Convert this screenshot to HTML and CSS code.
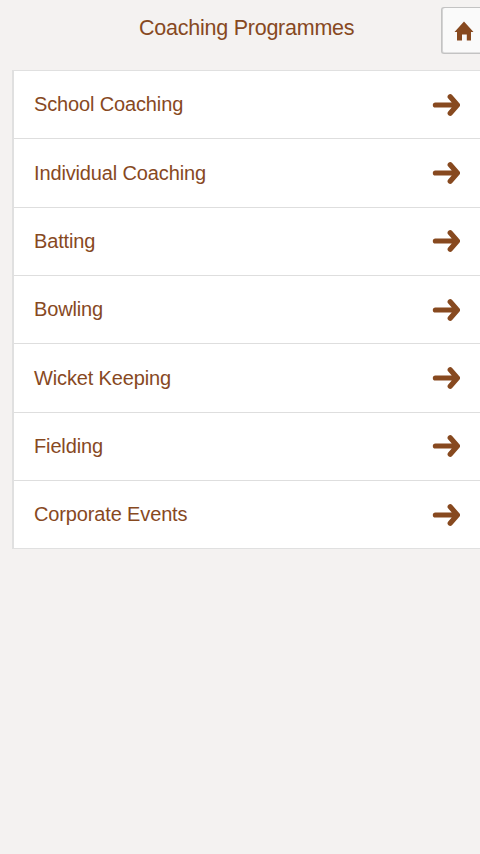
FILE: index.html
```html
<!DOCTYPE html>
<html lang="en">
<head>
<meta charset="utf-8">
<title>Coaching Programmes</title>
<link rel="stylesheet" href="styles.css">
</head>
<body>
<svg class="defs" aria-hidden="true">
  <symbol id="arrow" viewBox="0 0 28 24"><path d="M3.4 12H23M18.2 3.8L25.4 12L18.2 20.2" fill="none" stroke="currentColor" stroke-width="5.2" stroke-linecap="round" stroke-linejoin="round"/></symbol>
</svg>
<header class="header">
  <h1 class="title">Coaching Programmes</h1>
  <a class="home" href="#" aria-label="Home"><svg class="home-icon" viewBox="0 0 20 20"><path d="M10 .5L19.5 11H17V19.5H12.8V13.5H8V19.5H3V11H.5Z" fill="currentColor"/></svg></a>
</header>
<ul class="list">
  <li class="row"><span>School Coaching</span><svg class="arrow"><use href="#arrow"/></svg></li>
  <li class="row"><span>Individual Coaching</span><svg class="arrow"><use href="#arrow"/></svg></li>
  <li class="row"><span>Batting</span><svg class="arrow"><use href="#arrow"/></svg></li>
  <li class="row"><span>Bowling</span><svg class="arrow"><use href="#arrow"/></svg></li>
  <li class="row"><span>Wicket Keeping</span><svg class="arrow"><use href="#arrow"/></svg></li>
  <li class="row"><span>Fielding</span><svg class="arrow"><use href="#arrow"/></svg></li>
  <li class="row"><span>Corporate Events</span><svg class="arrow"><use href="#arrow"/></svg></li>
</ul>
</body>
</html>
```
FILE: styles.css
```css
* { box-sizing: border-box; }
body {
  margin: 0;
  min-height: 100vh;
  overflow: hidden;
  background: #f4f2f1;
  color: #87491f;
  font-family: "Liberation Sans", Arial, sans-serif;
}
.defs { display: none; }
.header {
  display: grid;
  grid-template-columns: 139px 1fr 39px;
  height: 70px;
  padding-top: 7px;
}
.title {
  grid-column: 2;
  margin: 0;
  font-size: 21.5px;
  font-weight: 400;
  line-height: 42px;
  letter-spacing: -0.24px;
  white-space: nowrap;
}
.home {
  display: flex;
  align-items: center;
  height: 47px;
  padding-left: 12px;
  border: solid #c3c3c3;
  border-width: 1px 0 1px 1px;
  border-radius: 3px 0 0 3px;
  box-shadow: inset 1px 0 #d4d4d4, inset 0 -1px #e0e0e0;
  background: #fafafa;
  color: #87491f;
}
.home-icon { width: 20px; height: 20px; flex: none; margin-top: 1px; }
.list {
  margin: 0 0 0 12px;
  padding: 0;
  list-style: none;
  background: #fff;
  border: solid #e0e0e0;
  border-width: 1px 0 1px 2px;
}
.row {
  display: flex;
  align-items: center;
  justify-content: space-between;
  height: 68.35px;
  padding: 0 20px 0 20px;
  font-size: 20px;
  letter-spacing: -0.14px;
}
.row:first-child { height: 67.4px; }
.row + .row { border-top: 1px solid #dedede; }
.arrow { width: 28px; height: 24px; }
```
